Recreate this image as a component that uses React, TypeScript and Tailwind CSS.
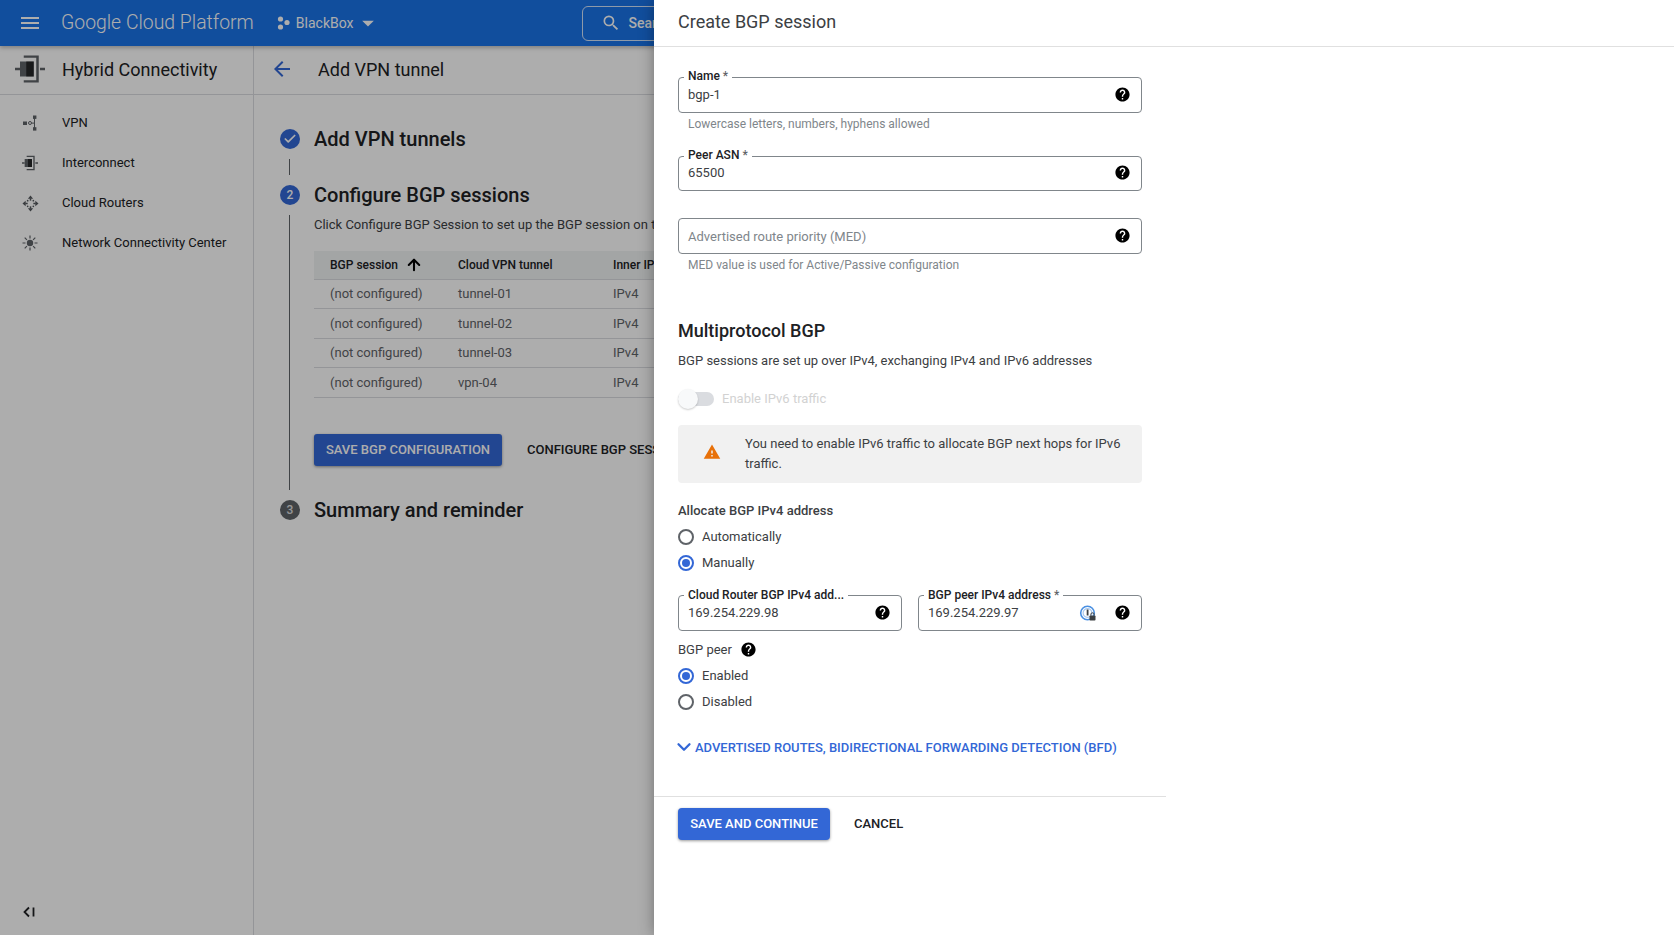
import { ArrowUp, ChevronDown, Check } from 'lucide-react';

const FONT = 'font-["Roboto",sans-serif]';
const HELP_PATH =
  'M12 2C6.48 2 2 6.48 2 12s4.48 10 10 10 10-4.48 10-10S17.52 2 12 2zm1 17h-2v-2h2v2zm2.07-7.75l-.9.92C13.45 12.9 13 13.5 13 15h-2v-.5c0-1.1.45-2.1 1.17-2.83l1.24-1.26c.37-.36.59-.86.59-1.41 0-1.1-.9-2-2-2s-2 .9-2 2H8c0-2.21 1.79-4 4-4s4 1.79 4 4c0 .88-.36 1.68-.93 2.25z';

const rows = [
  ['(not configured)', 'tunnel-01', 'IPv4'],
  ['(not configured)', 'tunnel-02', 'IPv4'],
  ['(not configured)', 'tunnel-03', 'IPv4'],
  ['(not configured)', 'vpn-04', 'IPv4'],
];

function HelpIcon() {
  return (
    <svg width="17" height="17" viewBox="0 0 24 24" fill="#000" className="shrink-0 mb-[2px]">
      <path d={HELP_PATH} />
    </svg>
  );
}

function InterconnectIcon({ size, color }: { size: number; color: string }) {
  return (
    <svg width={size} height={size} viewBox="0 0 24 24" fill={color}>
      <path d="M0 11h4v2H0zM20 11h4v2h-4z" />
      <path d="M7 1.2h12v21.6H7v-1.8h10V3H7z" />
      <path d="M4 6h11v12H4z" />
      <path d="M9 6h6v12H9z" fillOpacity="0.6" fill="#000" />
    </svg>
  );
}

function VpnIcon() {
  return (
    <svg width="16" height="16" viewBox="0 0 16 16" fill="#5f6368">
      <rect x="0" y="6.5" width="4" height="3.5" />
      <circle cx="7" cy="8" r="1.5" fill="none" stroke="#5f6368" />
      <rect x="8.5" y="7.6" width="3" height="1" />
      <rect x="11" y="3" width="1" height="10" />
      <rect x="10" y="0.5" width="3.4" height="3.4" />
      <rect x="10" y="12.2" width="3.4" height="3.4" />
    </svg>
  );
}

function RouterIcon() {
  return (
    <svg width="17" height="17" viewBox="0 0 18 18" fill="#55595e">
      <path d="M9 0.5l2.8 3.4H6.2zM9 17.5l-2.8-3.4h5.6zM0.5 9l3.4-2.8v5.6zM17.5 9l-3.4 2.8V6.2z" />
      <rect x="8.2" y="3.5" width="1.6" height="2.5" />
      <rect x="8.2" y="12" width="1.6" height="2.5" />
      <rect x="3.5" y="8.2" width="2.5" height="1.6" />
      <rect x="12" y="8.2" width="2.5" height="1.6" />
      <circle cx="6" cy="6" r="0.9" />
      <circle cx="12" cy="6" r="0.9" />
      <circle cx="6" cy="12" r="0.9" />
      <circle cx="12" cy="12" r="0.9" />
    </svg>
  );
}

function HubIcon() {
  return (
    <svg width="16" height="16" viewBox="0 0 16 16" fill="none" stroke="#5f6368" strokeWidth="1.2">
      <path d="M8 0.5v3M8 12.5v3M0.5 8h3M12.5 8h3M2.7 2.7l2.2 2.2M11.1 11.1l2.2 2.2M13.3 2.7l-2.2 2.2M4.9 11.1l-2.2 2.2" />
      <circle cx="8" cy="8" r="3.2" fill="#5f6368" stroke="none" />
    </svg>
  );
}

function PasswordIcon() {
  return (
    <svg width="18" height="18" viewBox="0 0 18 18" className="shrink-0">
      <circle cx="8.5" cy="9" r="6.8" fill="none" stroke="#4a90e2" strokeWidth="1.6" />
      <circle cx="8.5" cy="9" r="4.4" fill="none" stroke="#a8c8ee" strokeWidth="1.2" />
      <rect x="7.7" y="5.5" width="1.8" height="6" fill="#3c4043" />
      <rect x="10.5" y="11.5" width="6" height="5" rx="0.8" fill="#3c4043" />
      <path d="M11.8 11.5v-1a1.7 1.7 0 0 1 3.4 0v1" fill="none" stroke="#3c4043" strokeWidth="1" />
    </svg>
  );
}

function Field({
  label,
  value,
  placeholder,
  required,
  extra,
  className,
  labelClass,
  valueClass,
}: {
  label?: string;
  value?: string;
  placeholder?: string;
  required?: boolean;
  extra?: React.ReactNode;
  className?: string;
  labelClass?: string;
  valueClass?: string;
}) {
  return (
    <div className={`relative flex items-center pl-[9px] pr-[10px] border border-[#80868b] rounded-[4px] ${className || 'h-[36px]'}`}>
      {label && (
        <span className={`absolute left-[5px] bg-white px-[4px] text-[12px] leading-[16px] font-medium text-[#202124] whitespace-nowrap ${labelClass || '-top-[10px]'}`}>
          {label}
          {required && <span className="text-[#5f6368]"> *</span>}
        </span>
      )}
      {value ? (
        <span className={`flex-1 text-[13px] text-[#3c4043] ${valueClass || ''}`}>{value}</span>
      ) : (
        <span className="flex-1 pt-[2px] text-[13px] text-[#80868b]">{placeholder}</span>
      )}
      {extra}
      <HelpIcon />
    </div>
  );
}

function Radio({ label, checked }: { label: string; checked?: boolean }) {
  return (
    <div className="h-[26px] flex items-center gap-[8px]">
      <span className={`w-[16px] h-[16px] rounded-full border-2 flex items-center justify-center ${checked ? 'border-[#3367d6]' : 'border-[#5f6368]'}`}>
        {checked && <span className="w-[8px] h-[8px] rounded-full bg-[#3367d6]" />}
      </span>
      <span className="text-[13px] text-[#3c4043]">{label}</span>
    </div>
  );
}

function NavItem({ icon, label }: { icon: React.ReactNode; label: string }) {
  return (
    <div className="h-[40px] flex items-center">
      <div className="w-[62px] pl-[22px] flex items-center">{icon}</div>
      <span className="text-[13px] text-[#202124] whitespace-nowrap">{label}</span>
    </div>
  );
}

export default function App() {
  return (
    <div className={`relative w-screen h-screen overflow-hidden bg-white ${FONT}`}>
      <div className="flex flex-col h-full">
        {/* Top bar */}
        <header className="relative h-[46px] shrink-0 bg-[#1a73e8] flex items-center text-white shadow-[0_2px_4px_rgba(0,0,0,0.25)]">
          <svg width="24" height="24" viewBox="0 0 24 24" fill="#fff" className="ml-[18px]">
            <path d="M3 18h18v-2H3v2zm0-5h18v-2H3v2zm0-7v2h18V6H3z" />
          </svg>
          <span className="ml-[19px] text-[19.4px] font-light text-white whitespace-nowrap">Google Cloud Platform</span>
          <svg width="16" height="16" viewBox="0 0 16 16" fill="#fff" className="ml-[22px]">
            <circle cx="4.5" cy="4" r="2.6" />
            <circle cx="11" cy="7.5" r="2.6" />
            <circle cx="4.5" cy="12" r="2.6" />
          </svg>
          <span className="ml-[4px] text-[14px] whitespace-nowrap">BlackBox</span>
          <svg width="28" height="28" viewBox="0 0 24 24" fill="#fff">
            <path d="M7 10l5 5 5-5z" />
          </svg>
          <div className="ml-[200px] w-[400px] h-[35px] shrink-0 border border-white/80 rounded-[6px] flex items-center pl-[18px]">
            <svg width="20" height="20" viewBox="0 0 24 24" fill="#fff">
              <path d="M15.5 14h-.79l-.28-.27A6.47 6.47 0 0 0 16 9.5 6.5 6.5 0 1 0 9.5 16c1.61 0 3.09-.59 4.23-1.57l.27.28v.79l5 4.99L20.49 19l-4.99-5zm-6 0C7.01 14 5 11.99 5 9.5S7.01 5 9.5 5 14 7.01 14 9.5 11.99 14 9.5 14z" />
            </svg>
            <span className="ml-[8px] text-[14px] font-medium">Search</span>
          </div>
        </header>

        <div className="flex flex-1 min-h-0">
          {/* Sidebar */}
          <aside className="w-[254px] shrink-0 border-r border-[#dadce0] flex flex-col">
            <div className="h-[49px] shrink-0 border-b border-[#dadce0] flex items-center pl-[15px] pb-[2px]">
              <InterconnectIcon size={30} color="#5f6368" />
              <span className="ml-[17px] text-[18px] text-[#202124] whitespace-nowrap">Hybrid Connectivity</span>
            </div>
            <nav className="pt-[8px]">
              <NavItem icon={<span className="ml-[1px] flex"><VpnIcon /></span>} label="VPN" />
              <NavItem icon={<InterconnectIcon size={16} color="#5f6368" />} label="Interconnect" />
              <NavItem icon={<RouterIcon />} label="Cloud Routers" />
              <NavItem icon={<HubIcon />} label="Network Connectivity Center" />
            </nav>
            <div className="mt-auto h-[46px] flex items-center pl-[22px]">
              <svg width="14" height="14" viewBox="0 0 14 14" fill="none" stroke="#202124" strokeWidth="1.8">
                <path d="M7 2.5L2.5 7 7 11.5M11.5 2.5v9" />
              </svg>
            </div>
          </aside>

          {/* Main */}
          <main className="flex-1 min-w-0 overflow-hidden flex flex-col">
            <div className="h-[49px] shrink-0 border-b border-[#dadce0] flex items-center pl-[16px] pb-[2px]">
              <svg width="24" height="24" viewBox="0 0 24 24" fill="#3367d6">
                <path d="M20 11H7.83l5.59-5.59L12 4l-8 8 8 8 1.41-1.41L7.83 13H20v-2z" />
              </svg>
              <span className="ml-[24px] text-[18px] text-[#202124] whitespace-nowrap">Add VPN tunnel</span>
            </div>

            <div className="pl-[26px] pt-[30px] w-[900px]">
              <div className="flex items-center h-[28px]">
                <span className="w-[20px] h-[20px] rounded-full bg-[#3367d6] flex items-center justify-center">
                  <Check size={14} color="#fff" strokeWidth={3} />
                </span>
                <span className="ml-[14px] text-[20px] font-medium text-[#202124] whitespace-nowrap">Add VPN tunnels</span>
              </div>
              <div className="ml-[9px] mt-[6px] w-px h-[16px] bg-[#5f6368]" />
              <div className="flex items-center h-[28px] mt-[6px]">
                <span className="w-[20px] h-[20px] rounded-full bg-[#3367d6] flex items-center justify-center text-white text-[12px] font-medium">2</span>
                <span className="ml-[14px] text-[20px] font-medium text-[#202124] whitespace-nowrap">Configure BGP sessions</span>
              </div>
              <div className="flex mt-[6px]">
                <div className="w-[20px] shrink-0 flex justify-center pr-px">
                  <div className="w-px bg-[#5f6368]" />
                </div>
                <div className="ml-[14px] flex-1 pb-[24px]">
                  <p className="text-[13px] leading-[20px] text-[#3c4043] whitespace-nowrap">
                    Click Configure BGP Session to set up the BGP session on the tunnel
                  </p>
                  <div className="mt-[16px] text-[12px]">
                    <div className="h-[28.5px] bg-[#f1f3f4] border-b border-[#dadce0] grid grid-cols-[144px_155px_1fr] items-center font-medium text-[#202124]">
                      <span className="pl-[16px] flex items-center">
                        BGP session
                        <ArrowUp size={18} strokeWidth={2.75} color="#000" className="ml-[7px]" />
                      </span>
                      <span>Cloud VPN tunnel</span>
                      <span>Inner IP</span>
                    </div>
                    {rows.map((row) => (
                      <div key={row[1]} className="h-[29.5px] border-b border-[#dadce0] grid grid-cols-[144px_155px_1fr] items-center text-[13px] text-[#5f6368]">
                        <span className="pl-[16px]">{row[0]}</span>
                        <span>{row[1]}</span>
                        <span>{row[2]}</span>
                      </div>
                    ))}
                  </div>
                  <div className="mt-[36.5px] flex items-center">
                    <button className="h-[32px] w-[188px] bg-[#3367d6] text-white rounded-[3px] text-[13px] font-medium shadow-[0_1px_3px_rgba(0,0,0,0.4)]">
                      SAVE BGP CONFIGURATION
                    </button>
                    <span className="ml-[25px] text-[13px] font-medium text-[#202124] whitespace-nowrap">CONFIGURE BGP SESSION</span>
                  </div>
                </div>
              </div>
              <div className="flex items-center h-[28px] mt-[6px]">
                <span className="w-[20px] h-[20px] rounded-full bg-[#5f6368] flex items-center justify-center text-white/80 text-[12px] font-medium">3</span>
                <span className="ml-[14px] text-[20px] font-medium text-[#202124] whitespace-nowrap">Summary and reminder</span>
              </div>
            </div>
          </main>
        </div>
      </div>

      {/* Scrim */}
      <div className="absolute inset-0 bg-black/32" />

      {/* Drawer */}
      <aside className="absolute top-0 right-0 bottom-0 w-[1020px] bg-white shadow-[0_0_14px_rgba(0,0,0,0.35)]">
        <div className="h-[47px] border-b border-[#e0e0e0] pl-[24px] flex items-center pb-[3px]">
          <h2 className="text-[18px] text-[#3c4043]">Create BGP session</h2>
        </div>

        <div className="w-[512px] px-[24px] pt-[30px]">
          <Field label="Name" required value="bgp-1" />
          <p className="mt-[3px] pl-[10px] text-[12px] leading-[16px] text-[#80868b]">Lowercase letters, numbers, hyphens allowed</p>
          <Field className="mt-[24px] h-[35px]" label="Peer ASN" required value="65500" valueClass="pb-[2px]" />
          <Field className="mt-[27px] h-[36px]" placeholder="Advertised route priority (MED)" />
          <p className="mt-[3px] pl-[10px] text-[12px] leading-[16px] text-[#80868b]">MED value is used for Active/Passive configuration</p>

          <h3 className="mt-[46px] text-[18px] leading-[24px] font-medium text-[#202124]">Multiprotocol BGP</h3>
          <p className="mt-[8px] text-[13px] leading-[20px] text-[#3c4043]">BGP sessions are set up over IPv4, exchanging IPv4 and IPv6 addresses</p>

          <div className="mt-[18px] h-[20px] flex items-center pb-px">
            <span className="relative w-[36px] h-[14px] rounded-full bg-[#dadce0]">
              <span className="absolute left-0 -top-[3px] w-[20px] h-[20px] rounded-full bg-[#f8f9fa] shadow-[0_1px_2px_rgba(0,0,0,0.2)]" />
            </span>
            <span className="ml-[8px] text-[13px] text-[#d2d2d2]">Enable IPv6 traffic</span>
          </div>

          <div className="mt-[16px] h-[58px] bg-[#f1f1f1] rounded-[4px] flex items-center pl-[25px] pr-[16px]">
            <svg width="18" height="18" viewBox="0 0 24 24" fill="#e8710a" className="shrink-0 mb-[5px]">
              <path d="M1 21h22L12 2 1 21zm12-3h-2v-2h2v2zm0-4h-2v-4h2v4z" />
            </svg>
            <p className="ml-[24px] text-[13px] leading-[20px] text-[#3c4043]">
              You need to enable IPv6 traffic to allocate BGP next hops for IPv6 traffic.
            </p>
          </div>

          <div className="mt-[18px] text-[13px] leading-[20px] font-medium text-[#3c4043]">Allocate BGP IPv4 address</div>
          <div className="mt-[3px]">
            <Radio label="Automatically" />
            <Radio label="Manually" checked />
          </div>

          <div className="mt-[19px] grid grid-cols-[224px_224px] gap-[16px]">
            <Field className="h-[36px]" labelClass="-top-[9px]" label="Cloud Router BGP IPv4 add..." value="169.254.229.98" />
            <Field
              className="h-[36px]"
              labelClass="-top-[9px]"
              label="BGP peer IPv4 address"
              required
              value="169.254.229.97"
              extra={
                <span className="mr-[17px] flex">
                  <PasswordIcon />
                </span>
              }
            />
          </div>

          <div className="mt-[9px] h-[20px] flex items-center text-[13px] text-[#3c4043]">
            BGP peer
            <span className="ml-[8px] flex">
              <HelpIcon />
            </span>
          </div>
          <div className="mt-[3px]">
            <Radio label="Enabled" checked />
            <Radio label="Disabled" />
          </div>

          <div className="mt-[23px] h-[20px] flex items-center -ml-[5px] text-[13px] font-medium text-[#3367d6] whitespace-nowrap">
            <ChevronDown size={22} strokeWidth={2.5} className="mb-[2px]" />
            <span>ADVERTISED ROUTES, BIDIRECTIONAL FORWARDING DETECTION (BFD)</span>
          </div>
        </div>

        <div className="w-[512px] mt-[38px] border-t border-[#e0e0e0] px-[24px] pt-[11px] flex items-center">
          <button className="h-[32px] w-[152px] bg-[#3367d6] text-white rounded-[4px] text-[13px] font-medium shadow-[0_1px_3px_rgba(0,0,0,0.4)]">
            SAVE AND CONTINUE
          </button>
          <span className="ml-[24px] text-[13px] font-medium text-[#202124]">CANCEL</span>
        </div>
      </aside>
    </div>
  );
}
